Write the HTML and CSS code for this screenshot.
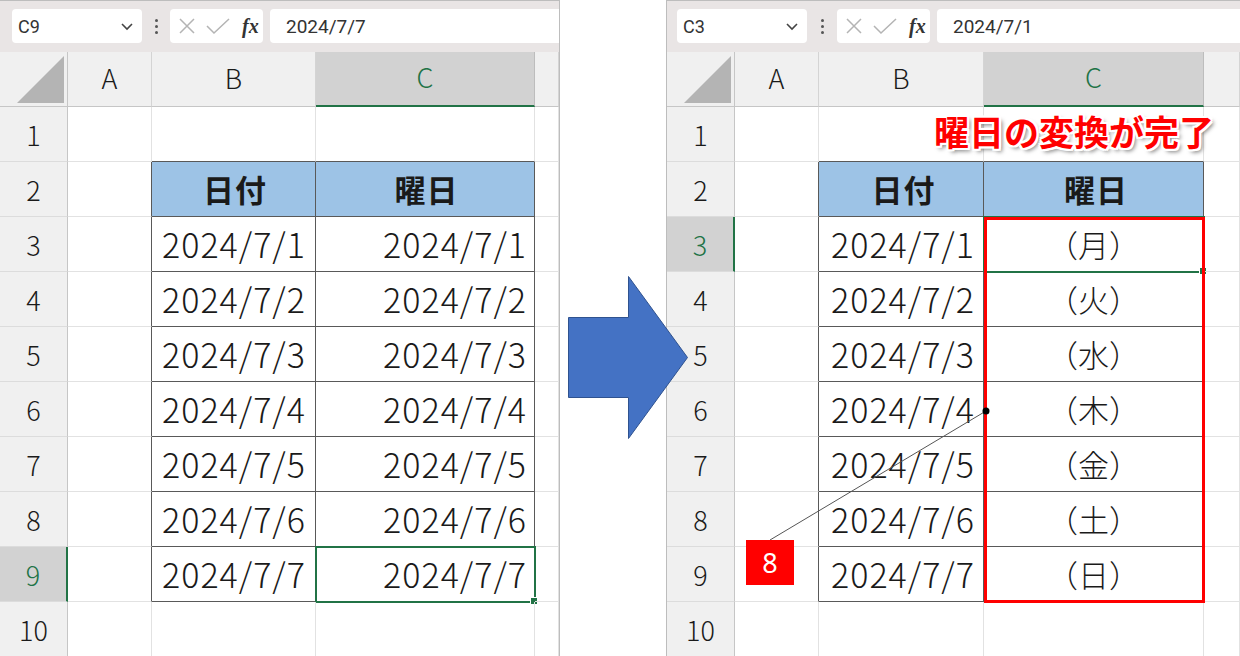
FILE: index.html
```html
<!DOCTYPE html>
<html lang="ja">
<head>
    <meta charset="UTF-8">
    <title>曜日の変換</title>
    <link rel="stylesheet" href="styles.css">
</head>
<body>
    <!-- Before -->
    <div class="sheet">
        <div class="fbar">
            <div class="namebox">C9
                <svg class="chev" width="14" height="10" viewBox="0 0 14 10"><polyline points="2,2 7,7 12,2" fill="none" stroke="#444" stroke-width="1.6"/></svg>
            </div>
            <div class="dots"><i></i><i></i><i></i></div>
            <div class="fxbox">
                <svg width="18" height="18" viewBox="0 0 18 18"><path d="M2 2 L16 16 M16 2 L2 16" stroke="#b4b4b4" stroke-width="1.5"/></svg>
                <svg width="24" height="18" viewBox="0 0 24 18"><polyline points="1,9 8,16 23,2" fill="none" stroke="#b4b4b4" stroke-width="1.5"/></svg>
                <span class="fx">fx</span>
            </div>
            <div class="finput">2024/7/7</div>
        </div>
        <div class="grid">
            <div class="corner"><span></span></div>
            <div class="hd">A</div><div class="hd">B</div><div class="hd on">C</div><div class="hd"></div>

            <div class="rh">1</div><div class="c"></div><div class="c eb"></div><div class="c eb"></div><div class="c"></div>
            <div class="rh">2</div><div class="c er"></div><div class="c t th">日付</div><div class="c t th">曜日</div><div class="c"></div>
            <div class="rh">3</div><div class="c er"></div><div class="c t">2024/7/1</div><div class="c t r">2024/7/1</div><div class="c"></div>
            <div class="rh">4</div><div class="c er"></div><div class="c t">2024/7/2</div><div class="c t r">2024/7/2</div><div class="c"></div>
            <div class="rh">5</div><div class="c er"></div><div class="c t">2024/7/3</div><div class="c t r">2024/7/3</div><div class="c"></div>
            <div class="rh">6</div><div class="c er"></div><div class="c t">2024/7/4</div><div class="c t r">2024/7/4</div><div class="c"></div>
            <div class="rh">7</div><div class="c er"></div><div class="c t">2024/7/5</div><div class="c t r">2024/7/5</div><div class="c"></div>
            <div class="rh">8</div><div class="c er"></div><div class="c t">2024/7/6</div><div class="c t r">2024/7/6</div><div class="c"></div>
            <div class="rh on">9</div><div class="c er"></div><div class="c t">2024/7/7</div><div class="c t r sel">2024/7/7</div><div class="c"></div>
            <div class="rh">10</div><div class="c"></div><div class="c"></div><div class="c"></div><div class="c"></div>
        </div>
    </div>

    <svg class="arrow" width="121" height="164" viewBox="0 0 121 164">
        <polygon points="0.5,41.5 60.5,41.5 60.5,0.5 119.5,81.5 60.5,162.5 60.5,121.5 0.5,121.5" fill="#4472c4" stroke="#2f528f" stroke-width="1"/>
    </svg>

    <!-- After -->
    <div class="sheet right">
        <div class="fbar">
            <div class="namebox">C3
                <svg class="chev" width="14" height="10" viewBox="0 0 14 10"><polyline points="2,2 7,7 12,2" fill="none" stroke="#444" stroke-width="1.6"/></svg>
            </div>
            <div class="dots"><i></i><i></i><i></i></div>
            <div class="fxbox">
                <svg width="18" height="18" viewBox="0 0 18 18"><path d="M2 2 L16 16 M16 2 L2 16" stroke="#b4b4b4" stroke-width="1.5"/></svg>
                <svg width="24" height="18" viewBox="0 0 24 18"><polyline points="1,9 8,16 23,2" fill="none" stroke="#b4b4b4" stroke-width="1.5"/></svg>
                <span class="fx">fx</span>
            </div>
            <div class="finput">2024/7/1</div>
        </div>
        <div class="grid">
            <div class="corner"><span></span></div>
            <div class="hd">A</div><div class="hd">B</div><div class="hd on">C</div><div class="hd"></div>

            <div class="rh">1</div><div class="c"></div><div class="c eb"></div><div class="c eb"></div><div class="c"></div>
            <div class="rh">2</div><div class="c er"></div><div class="c t th">日付</div><div class="c t th">曜日</div><div class="c"></div>
            <div class="rh on">3</div><div class="c er"></div><div class="c t">2024/7/1</div><div class="c t m sel">（月）</div><div class="c"></div>
            <div class="rh">4</div><div class="c er"></div><div class="c t">2024/7/2</div><div class="c t m">（火）</div><div class="c"></div>
            <div class="rh">5</div><div class="c er"></div><div class="c t">2024/7/3</div><div class="c t m">（水）</div><div class="c"></div>
            <div class="rh">6</div><div class="c er"></div><div class="c t">2024/7/4</div><div class="c t m">（木）</div><div class="c"></div>
            <div class="rh">7</div><div class="c er"></div><div class="c t">2024/7/5</div><div class="c t m">（金）</div><div class="c"></div>
            <div class="rh">8</div><div class="c er"></div><div class="c t">2024/7/6</div><div class="c t m">（土）</div><div class="c"></div>
            <div class="rh">9</div><div class="c er"></div><div class="c t">2024/7/7</div><div class="c t m">（日）</div><div class="c"></div>
            <div class="rh">10</div><div class="c"></div><div class="c"></div><div class="c"></div><div class="c"></div>
        </div>

        <!-- annotations -->
        <div class="redbox"></div>
        <div class="title">曜日の変換が完了</div>
        <svg class="leader" width="573" height="656">
            <line x1="103" y1="539" x2="319" y2="410" stroke="#555" stroke-width="1"/>
            <circle cx="319" cy="410" r="3.5" fill="#000"/>
        </svg>
        <div class="badge">8</div>
    </div>
</body>
</html>
```

FILE: styles.css
```css
body {
    margin: 0;
    width: 1240px;
    height: 656px;
    overflow: hidden;
    background: #fff;
    display: flex;
    gap: 106px;
    position: relative;
    font-family: "Noto Sans CJK JP", "Noto Sans", sans-serif;
    color: #1a1a1a;
}

.sheet {
    width: 560px;
    height: 656px;
    border-top: 1px solid #bdbdbd;
    border-right: 1px solid #bdbdbd;
    box-sizing: border-box;
    overflow: hidden;
    position: relative;
}

.sheet.right {
    flex: 1;
    border-left: 1px solid #bdbdbd;
    border-right: none;
}

/* formula bar */
.fbar {
    height: 51px;
    background: #e9e5e5;
    display: flex;
    align-items: center;
    padding-left: 12px;
    padding-bottom: 1px;
    box-sizing: border-box;
}

.right .fbar {
    padding-left: 10px;
}

.namebox {
    width: 130px;
    height: 34px;
    background: #fff;
    border-radius: 4px;
    display: flex;
    align-items: center;
    justify-content: space-between;
    padding: 0 8px 0 6px;
    box-sizing: border-box;
    font-family: Roboto, "Liberation Sans", sans-serif;
    font-size: 18px;
    color: #333;
}

.chev {
    margin-top: 1px;
}

.dots {
    width: 28px;
    display: flex;
    flex-direction: column;
    align-items: center;
    gap: 3px;
}

.right .dots {
    width: 30px;
}

.dots i {
    width: 3px;
    height: 3px;
    border-radius: 50%;
    background: #555;
}

.fxbox {
    width: 93px;
    height: 34px;
    background: #fff;
    border-radius: 4px;
    display: flex;
    align-items: center;
    gap: 10px;
    padding-left: 8px;
    box-sizing: border-box;
}

.fx {
    font-family: "Liberation Serif", serif;
    font-style: italic;
    font-weight: bold;
    font-size: 20px;
    color: #333;
    margin-left: 2px;
}

.finput {
    flex: 1;
    height: 34px;
    margin-left: 7px;
    background: #fff;
    border-radius: 4px 0 0 4px;
    display: flex;
    align-items: center;
    padding-left: 16px;
    font-family: Roboto, "Liberation Sans", sans-serif;
    font-size: 19px;
    color: #333;
}

/* grid */
.grid {
    display: grid;
    grid-template-columns: 68px 84px 164px 219px 1fr;
    grid-auto-rows: 55px;
}

.right .grid {
    grid-template-columns: 68px 84px 165px 220px 1fr;
}

.grid > div {
    box-sizing: border-box;
    display: flex;
    align-items: center;
}

.corner {
    background: #f0f0f0;
    border-right: 1px solid #c6c6c6;
    border-bottom: 1px solid #c6c6c6;
    position: relative;
}

.corner span {
    position: absolute;
    right: 3px;
    bottom: 3px;
    width: 47px;
    height: 47px;
    background: #b4b4b4;
    clip-path: polygon(100% 0, 100% 100%, 0 100%);
}

.hd {
    background: #f0f0f0;
    border-right: 1px solid #d4d4d4;
    border-bottom: 1px solid #c6c6c6;
    justify-content: center;
    font-size: 27px;
    font-weight: 300;
    padding-bottom: 4px;
}

.hd.on {
    background: #d2d2d2;
    color: #217346;
    border-bottom: 2px solid #217346;
    border-right-color: #bdbdbd;
}

.rh {
    background: #f0f0f0;
    border-right: 1px solid #c6c6c6;
    border-bottom: 1px solid #dcdcdc;
    justify-content: center;
    font-size: 27px;
    font-weight: 300;
}

.rh.on {
    background: #d2d2d2;
    color: #217346;
    border-right: 2px solid #217346;
}

.c {
    border-right: 1px solid #e2e2e2;
    border-bottom: 1px solid #e2e2e2;
    font-size: 34px;
    font-weight: 300;
    letter-spacing: 1px;
    padding: 0 7px 2px 10px;
    position: relative;
}

.right .c {
    padding-left: 12px;
}

.c.er {
    border-right-color: #595959;
}

.c.eb {
    border-bottom-color: #595959;
}

.c.t {
    border-right-color: #595959;
    border-bottom-color: #595959;
}

.c.th {
    background: #9dc3e6;
    justify-content: center;
    font-weight: bold;
    font-size: 31px;
    letter-spacing: 1px;
}

.c.r {
    justify-content: flex-end;
}

.right .c.m {
    justify-content: center;
    padding: 0 0 2px 0;
    font-size: 31px;
    letter-spacing: 0;
}

.c.sel {
    outline: 2px solid #217346;
    outline-offset: -1px;
}

.c.sel::after {
    content: "";
    position: absolute;
    right: -4px;
    bottom: -4px;
    width: 6px;
    height: 6px;
    background: #217346;
    border: 1px solid #fff;
}

/* annotations */
.arrow {
    position: absolute;
    left: 568px;
    top: 276px;
    z-index: 5;
}

.redbox {
    position: absolute;
    left: 317px;
    top: 216px;
    width: 221px;
    height: 386px;
    border: 3px solid #ff0000;
    box-sizing: border-box;
}

.title {
    position: absolute;
    left: 267px;
    top: 104px;
    color: #ff0000;
    font-weight: bold;
    font-size: 35px;
    white-space: nowrap;
    text-shadow: -2px 0 #fff, 2px 0 #fff, 0 -2px #fff, 0 2px #fff,
        -2px -2px #fff, 2px 2px #fff, -2px 2px #fff, 2px -2px #fff,
        3px 3px 4px rgba(0, 0, 0, 0.55);
}

.leader {
    position: absolute;
    left: 0;
    top: 0;
    pointer-events: none;
}

.badge {
    position: absolute;
    left: 79px;
    top: 539px;
    width: 48px;
    height: 45px;
    background: #ff0000;
    color: #fff;
    font-family: "Noto Sans", sans-serif;
    font-size: 27px;
    display: flex;
    align-items: center;
    justify-content: center;
}
```
